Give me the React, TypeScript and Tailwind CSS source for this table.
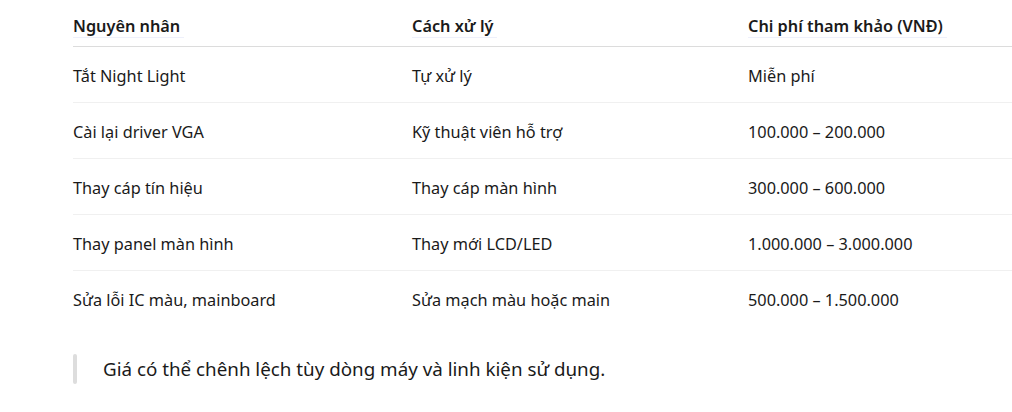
const rows = [
  ["Tắt Night Light", "Tự xử lý", "Miễn phí"],
  ["Cài lại driver VGA", "Kỹ thuật viên hỗ trợ", "100.000 – 200.000"],
  ["Thay cáp tín hiệu", "Thay cáp màn hình", "300.000 – 600.000"],
  ["Thay panel màn hình", "Thay mới LCD/LED", "1.000.000 – 3.000.000"],
  ["Sửa lỗi IC màu, mainboard", "Sửa mạch màu hoặc main", "500.000 – 1.500.000"],
];

const headers = ["Nguyên nhân", "Cách xử lý", "Chi phí tham khảo (VNĐ)"];

export default function App() {
  return (
    <div
      className="w-[1012px] h-[412px] overflow-hidden bg-white text-[#1a1a1a] pl-[73px]"
      style={{ fontFamily: '"Noto Sans", "Open Sans", sans-serif' }}
    >
      <table className="table-fixed w-[1014px] border-collapse text-[16.3px] leading-6">
        <colgroup>
          <col className="w-[339px]" />
          <col className="w-[336px]" />
          <col className="w-[339px]" />
        </colgroup>
        <thead>
          <tr className="border-b border-[#dcdcdc]">
            {headers.map((h) => (
              <th key={h} className="text-left font-semibold pt-[14px] pb-[8px] p-0">
                <span className="border-b border-[#eef0fb] pr-1">{h}</span>
              </th>
            ))}
          </tr>
        </thead>
        <tbody>
          {rows.map((r, i) => (
            <tr
              key={r[0]}
              className={i < rows.length - 1 ? "border-b border-[#f0f0f0]" : ""}
            >
              {r.map((c) => (
                <td key={c} className="h-[56px] pt-[2px] align-middle font-normal">
                  {c}
                </td>
              ))}
            </tr>
          ))}
        </tbody>
      </table>

      <blockquote className="mt-[27px] flex items-center gap-[26px]">
        <div className="w-[4px] h-[30px] rounded-full bg-[#dddddd]" />
        <p className="text-[18.8px] leading-[30px]">
          Giá có thể chênh lệch tùy dòng máy và linh kiện sử dụng.
        </p>
      </blockquote>
    </div>
  );
}
